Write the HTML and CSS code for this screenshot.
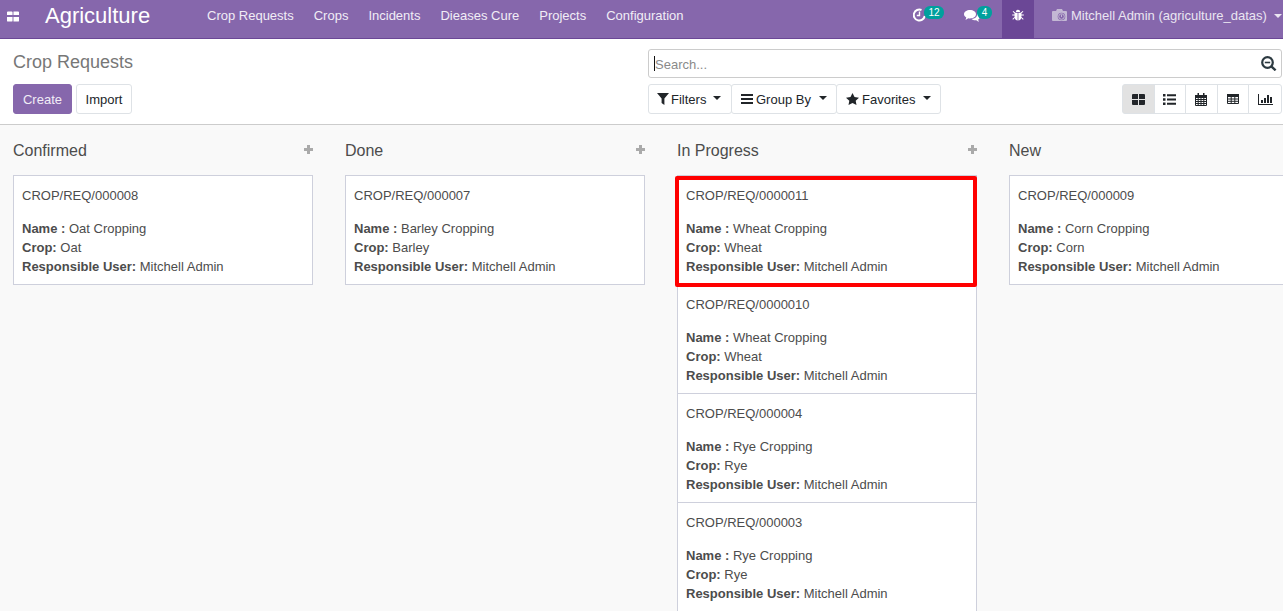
FILE: index.html
```html
<!DOCTYPE html>
<html>
	<head>
		<meta charset="UTF-8">
		<title>Crop Requests</title>
		<link rel="stylesheet" href="styles.css">
	</head>
	<body>
		<header class="navbar">
			<a class="apps-icon">
				<svg width="12" height="11" viewBox="0 0 13 11"><path fill="#fff" d="M1 0h4a1 1 0 0 1 1 1v3H0V1a1 1 0 0 1 1-1zM8 0h4a1 1 0 0 1 1 1v3H7V0zM0 6h6v4a1 1 0 0 1-1 1H1a1 1 0 0 1-1-1zM7 6h6v4a1 1 0 0 1-1 1H7z"/></svg>
			</a>
			<span class="brand">Agriculture</span>
			<ul class="menu">
				<li>Crop Requests</li>
				<li>Crops</li>
				<li>Incidents</li>
				<li>Dieases Cure</li>
				<li>Projects</li>
				<li>Configuration</li>
			</ul>
			<div class="systray">
				<div class="tray-item tray-clock">
					<svg width="13" height="14" viewBox="0 0 13 14"><path fill="none" stroke="#fff" stroke-width="2" d="M8.500 2a5.500 5.500 0 1 0 3.200 6"/><path fill="none" stroke="#fff" stroke-width="1.400" d="M6.500 3.500v4H3.800"/></svg>
					<span class="badge">12</span>
				</div>
				<div class="tray-item tray-chat">
					<svg width="16" height="14" viewBox="0 0 16 14"><path fill="#fff" d="M6 1c3.300 0 6 1.800 6 4.200S9.300 9.400 6 9.400c-.6 0-1.200 0-1.700-.2L1.500 11l.8-2.600C.9 7.600 0 6.500 0 5.200 0 2.800 2.700 1 6 1z"/><path fill="#fff" d="M13 4.500c1.800.6 3 1.900 3 3.300 0 1.100-.7 2.100-1.800 2.800l.6 2.400-2.500-1.700c-2 .2-3.800-.3-4.800-1.400 3.200.1 6.100-1.900 5.500-5.400z"/></svg>
					<span class="badge">4</span>
				</div>
				<div class="tray-bug">
					<svg width="12" height="12" viewBox="0 0 14 13"><path fill="#fff" d="M4.500 3a2.500 2.500 0 0 1 5 0zM4 3.800h2.600V13C4.700 12.800 3.600 11.700 3.300 10L1.200 12.100.4 11.300 3 8.700V7H.2V6H3V4.800L.7 2.500l.8-.8zM7.400 3.800H10l2.500-2.100.8.8L11 4.800V6h2.800v1H11v1.700l2.600 2.600-.8.8L10.700 10c-.3 1.700-1.400 2.800-3.300 3z"/></svg>
				</div>
				<div class="user">
					<svg width="15" height="13" viewBox="0 0 15 13"><path fill="#c3b8d4" d="M1 2h3l1-2h5l1 2h3a1 1 0 0 1 1 1v8a1 1 0 0 1-1 1H1a1 1 0 0 1-1-1V3a1 1 0 0 1 1-1z"/><circle cx="9.500" cy="7.500" r="3.800" fill="#8667ac"/><circle cx="9.500" cy="7.500" r="2.800" fill="none" stroke="#c3b8d4"/><path stroke="#c3b8d4" d="M9.500 5.500v2.500"/></svg>
					<span>Mitchell Admin (agriculture_datas)</span>
					<i class="caret caret-light"></i>
				</div>
			</div>
		</header>

		<section class="control-panel">
			<div class="cp-left">
				<h1 class="breadcrumb">Crop Requests</h1>
				<div class="btn-row">
					<button class="btn btn-primary">Create</button>
					<button class="btn btn-import">Import</button>
				</div>
			</div>
			<div class="cp-right">
				<div class="search">
					<span class="search-cursor"></span>
					<span class="search-text">Search...</span>
					<svg class="search-icon" width="16" height="15" viewBox="0 0 16 15"><circle cx="6.500" cy="6.500" r="5.300" fill="none" stroke="#2c3a41" stroke-width="2.200"/><path stroke="#2c3a41" stroke-width="1.600" d="M3.800 6.500h5.400"/><path stroke="#2c3a41" stroke-width="2.400" d="M10.300 10.300l4.300 4"/></svg>
				</div>
				<div class="tools">
					<div class="filter-group">
						<button class="btn btn-filter btn-filters">
							<svg width="12" height="12" viewBox="0 0 12 12"><path fill="#212529" d="M0 0h12L7.400 5.400V12L4.600 10V5.400z"/></svg>
							<span>Filters</span>
							<i class="caret"></i>
						</button>
						<button class="btn btn-filter btn-group-by">
							<svg width="12" height="10" viewBox="0 0 12 10"><path fill="#212529" d="M0 0h12v2H0zM0 4h12v2H0zM0 8h12v2H0z"/></svg>
							<span>Group By</span>
							<i class="caret"></i>
						</button>
						<button class="btn btn-filter btn-favorites">
							<svg width="13" height="12" viewBox="0 0 13 12"><path fill="#212529" d="M6.500 0l2 4.100 4.500.6-3.300 3.100.8 4.200-4-2.100-4 2.100.8-4.200L0 4.700l4.500-.6z"/></svg>
							<span>Favorites</span>
							<i class="caret"></i>
						</button>
					</div>
					<div class="views">
						<button class="view active">
							<svg width="13" height="11" viewBox="0 0 13 11"><path fill="#212529" d="M0 1a1 1 0 0 1 1-1h5v5H0zM7 0h5a1 1 0 0 1 1 1v4H7zM0 6h6v5H1a1 1 0 0 1-1-1zM7 6h6v4a1 1 0 0 1-1 1H7z"/></svg>
						</button>
						<button class="view">
							<svg width="13" height="11" viewBox="0 0 13 11"><path fill="#212529" d="M0 0h2.500v2.500H0zM4 .3h9v2H4zM0 4.200h2.500v2.500H0zM4 4.500h9v2H4zM0 8.400h2.500v2.500H0zM4 8.700h9v2H4z"/></svg>
						</button>
						<button class="view">
							<svg width="12" height="13" viewBox="0 0 12 13"><path fill="none" stroke="#212529" d="M.5 2.500h11v10H.5zM.5 6.500h11M.5 8.500h11M.5 10.500h11M3.200 5v8M6 5v8M8.800 5v8"/><path fill="#212529" d="M0 2h12v3H0zM2.500 0h1.500v2.500H2.500zM8 0h1.500v2.500H8z"/></svg>
						</button>
						<button class="view">
							<svg width="12" height="10" viewBox="0 0 12 10"><path fill="none" stroke="#212529" d="M.5 2.500h11v7H.5zM.5 5h11M.5 7.300h11M4.200 2.500v7M7.800 2.500v7"/><path fill="#212529" d="M0 0h12v3H0z"/></svg>
						</button>
						<button class="view">
							<svg width="15" height="11" viewBox="0 0 15 11"><path fill="#212529" d="M0 0h1v10h14v1H0zM3 6h2v3H3zM6 4h2v5H6zM9 1h2v8H9zM12 3h2v6h-2z"/></svg>
						</button>
					</div>
				</div>
			</div>
		</section>

		<main class="kanban">
			<div class="column">
				<div class="column-head"><span>Confirmed</span><i class="plus"></i></div>
				<div class="card">
					<div class="card-ref">CROP/REQ/000008</div>
					<div><b>Name :</b> Oat Cropping</div>
					<div><b>Crop:</b> Oat</div>
					<div><b>Responsible User:</b> Mitchell Admin</div>
				</div>
			</div>
			<div class="column">
				<div class="column-head"><span>Done</span><i class="plus"></i></div>
				<div class="card">
					<div class="card-ref">CROP/REQ/000007</div>
					<div><b>Name :</b> Barley Cropping</div>
					<div><b>Crop:</b> Barley</div>
					<div><b>Responsible User:</b> Mitchell Admin</div>
				</div>
			</div>
			<div class="column">
				<div class="column-head"><span>In Progress</span><i class="plus"></i></div>
				<div class="card card-marked">
					<div class="card-ref">CROP/REQ/0000011</div>
					<div><b>Name :</b> Wheat Cropping</div>
					<div><b>Crop:</b> Wheat</div>
					<div><b>Responsible User:</b> Mitchell Admin</div>
				</div>
				<div class="card">
					<div class="card-ref">CROP/REQ/0000010</div>
					<div><b>Name :</b> Wheat Cropping</div>
					<div><b>Crop:</b> Wheat</div>
					<div><b>Responsible User:</b> Mitchell Admin</div>
				</div>
				<div class="card">
					<div class="card-ref">CROP/REQ/000004</div>
					<div><b>Name :</b> Rye Cropping</div>
					<div><b>Crop:</b> Rye</div>
					<div><b>Responsible User:</b> Mitchell Admin</div>
				</div>
				<div class="card">
					<div class="card-ref">CROP/REQ/000003</div>
					<div><b>Name :</b> Rye Cropping</div>
					<div><b>Crop:</b> Rye</div>
					<div><b>Responsible User:</b> Mitchell Admin</div>
				</div>
			</div>
			<div class="column">
				<div class="column-head"><span>New</span></div>
				<div class="card">
					<div class="card-ref">CROP/REQ/000009</div>
					<div><b>Name :</b> Corn Cropping</div>
					<div><b>Crop:</b> Corn</div>
					<div><b>Responsible User:</b> Mitchell Admin</div>
				</div>
			</div>
		</main>
	</body>
</html>
```

FILE: styles.css
```css
html,body{
	height: 100%;
	margin: 0;
	overflow: hidden;
}
body{
	display: flex;
	flex-direction: column;
	font-family: "Liberation Sans", Arial, sans-serif;
	font-size: 13px;
	color: #4c4c4c;
	background: #fff;
}
ul{
	padding: 0;
	margin: 0;
	list-style: none;
}

/* top bar */
.navbar{
	flex: none;
	display: flex;
	align-items: center;
	height: 38px;
	background: #8667ac;
	border-bottom: 1px solid #6b4796;
	color: #fff;
}
.apps-icon{
	display: flex;
	width: 45px;
	padding: 0 0 6px 7px;
	box-sizing: border-box;
}
.brand{
	width: 152px;
	padding-bottom: 7px;
	font-size: 22px;
}
.menu{
	display: flex;
	padding: 0 0 7px 0;
}
.menu li{
	padding: 0 10px;
	line-height: 18px;
	color: #f1edf6;
}
.systray{
	margin-left: auto;
	display: flex;
	align-items: stretch;
	height: 100%;
}
.tray-item{
	display: flex;
	position: relative;
}
.tray-clock{
	width: 51px;
	padding: 8px 0 0 0;
	box-sizing: border-box;
}
.tray-chat{
	width: 38px;
	padding: 9px 0 0 0;
	box-sizing: border-box;
}
.badge{
	position: absolute;
	top: 6px;
	height: 13px;
	border-radius: 6px;
	background: #00a09d;
	font-size: 10px;
	line-height: 13px;
	text-align: center;
	color: #fff;
}
.tray-clock .badge{
	left: 11px;
	width: 20px;
}
.tray-chat .badge{
	left: 13px;
	width: 15px;
}
.tray-bug{
	display: flex;
	align-items: center;
	justify-content: center;
	width: 32px;
	padding-bottom: 8px;
	box-sizing: border-box;
	background: #6b4796;
}
.user{
	display: flex;
	align-items: center;
	width: 249px;
	padding: 0 0 7px 18px;
	box-sizing: border-box;
	color: #eae5f1;
}
.user span{
	margin-left: 4px;
}
.caret{
	display: inline-block;
	width: 0;
	height: 0;
	margin-left: 6px;
	border-top: 4px solid #212529;
	border-left: 4px solid transparent;
	border-right: 4px solid transparent;
}
.caret-light{
	margin-left: 7px;
	border-top-color: #eae5f1;
}

/* breadcrumb, buttons, search */
.control-panel{
	flex: none;
	display: flex;
	height: 86px;
	padding-left: 13px;
	box-sizing: border-box;
	border-bottom: 1px solid #ccc;
	background: #fff;
}
.cp-left{
	width: 635px;
	flex: none;
}
.breadcrumb{
	margin: 0;
	padding-top: 12px;
	height: 33px;
	font-size: 18px;
	font-weight: normal;
	line-height: 22px;
	color: #777;
}
.btn-row{
	display: flex;
	gap: 4px;
}
.btn{
	height: 30px;
	padding: 0;
	background: #fff;
	border: 1px solid #dee2e6;
	border-radius: 3px;
	font: inherit;
	color: #212529;
}
.btn-primary{
	width: 59px;
	background: #8667ac;
	border-color: #8667ac;
	color: #f1edf6;
}
.btn-import{
	width: 56px;
}
.cp-right{
	flex: 1;
	padding: 10px 1px 0 0;
}
.search{
	display: flex;
	align-items: center;
	height: 29px;
	box-sizing: border-box;
	padding: 0 4px 0 5px;
	border: 1px solid #ccc;
	border-radius: 3px;
}
.search-cursor{
	width: 1px;
	height: 15px;
	background: #111;
}
.search-text{
	flex: 1;
	padding-top: 2px;
	color: #8a8a8a;
}
.tools{
	display: flex;
	justify-content: space-between;
	margin-top: 6px;
}
.filter-group{
	display: flex;
}
.btn-filter{
	display: flex;
	align-items: center;
	gap: 3px;
	padding-left: 9px;
}
.btn-filter .caret{
	margin: 0 0 2px 5px;
}
.btn-filters{
	width: 84px;
	gap: 2px;
	padding-left: 8px;
}
.btn-group-by{
	width: 106px;
	margin-left: -1px;
}
.btn-favorites{
	width: 105px;
	margin-left: -1px;
}
.views{
	display: flex;
}
.view{
	display: flex;
	align-items: center;
	justify-content: center;
	width: 32.5px;
	height: 30px;
	margin-left: -1px;
	padding: 0;
	background: #fff;
	border: 1px solid #dee2e6;
}
.view:first-child{
	border-radius: 3px 0 0 3px;
}
.view:last-child{
	width: 34px;
	border-radius: 0 3px 3px 0;
}
.view.active{
	background: #e2e2e2;
}

/* kanban board */
.kanban{
	flex: 1;
	min-height: 0;
	display: flex;
	gap: 32px;
	padding-left: 13px;
	overflow: hidden;
	background: #f9f9f9;
}
.column{
	flex: 0 0 300px;
}
.column-head{
	display: flex;
	align-items: center;
	justify-content: space-between;
	height: 49px;
	padding-top: 1px;
	font-size: 16px;
}
.plus{
	width: 9px;
	height: 9px;
	margin-bottom: 2px;
	background:
		linear-gradient(#aaa,#aaa) center / 9px 3px no-repeat,
		linear-gradient(#aaa,#aaa) center / 3px 9px no-repeat;
}
.card{
	position: relative;
	margin-bottom: -1px;
	padding: 10px 8px 8px;
	background: #fff;
	border: 1px solid #ced0dc;
	line-height: 19px;
}
.card-ref{
	margin-bottom: 14px;
}
.card-marked{
	z-index: 1;
}
.card-marked::after{
	content: "";
	position: absolute;
	top: 0;
	left: -3px;
	right: -1px;
	bottom: -3px;
	border: 4px solid #f00;
	border-radius: 2px;
}
```
